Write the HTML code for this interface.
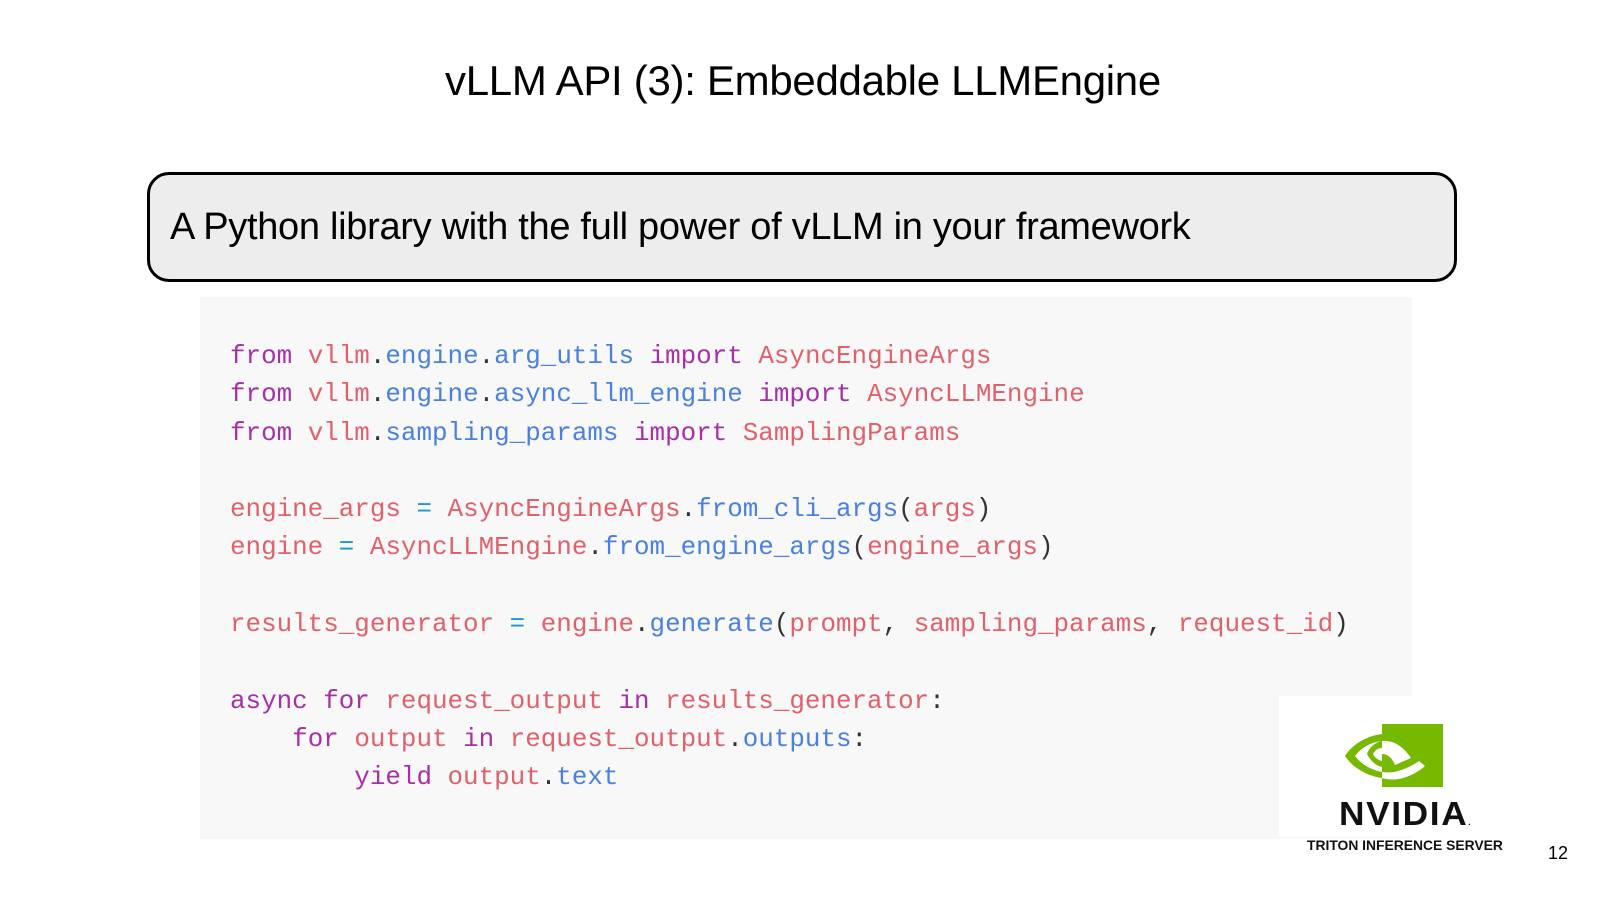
<!DOCTYPE html>
<html><head><meta charset="utf-8"><style>
body{margin:0;width:1602px;height:900px;background:#fff;position:relative;overflow:hidden;font-family:"Liberation Sans",sans-serif}
.title{position:absolute;left:0;width:1606px;text-align:center;top:57px;font-size:42px;color:#000;letter-spacing:-0.3px}
.box{position:absolute;left:147px;top:172px;width:1304px;height:104px;border:3px solid #000;border-radius:22px;background:#ededed}
.box span{position:absolute;left:20px;top:31px;font-size:38px;letter-spacing:-0.3px;color:#000}
.code{position:absolute;left:200px;top:297px;width:1212px;height:542px;background:#f8f8f8}
pre{position:absolute;left:230px;top:337px;margin:0;font-family:"Liberation Mono",monospace;font-size:25.9px;line-height:38.3px;color:#e0606c}
.k{color:#a530a8}.b{color:#4a80e0}.d{color:#333}.e{color:#1a9ad0}
.logo{position:absolute;left:1279px;top:696px;width:160px;height:140px;background:#fff}
.nv{position:absolute;left:1339px;top:795px;font-size:33px;font-weight:bold;letter-spacing:1.5px;color:#111;transform:scaleX(1.07);transform-origin:left}
.tr{position:absolute;left:1307px;top:837px;font-size:14px;color:#111;transform:scaleX(0.99);transform-origin:left;font-weight:bold}
.pn{position:absolute;left:1548px;top:843px;font-size:18px}
</style></head><body>
<div class="title">vLLM API (3): Embeddable LLMEngine</div>
<div class="box"><span>A Python library with the full power of vLLM in your framework</span></div>
<div class="code"></div>
<pre><span class="k">from</span> vllm<span class="d">.</span><span class="b">engine</span><span class="d">.</span><span class="b">arg_utils</span> <span class="k">import</span> AsyncEngineArgs
<span class="k">from</span> vllm<span class="d">.</span><span class="b">engine</span><span class="d">.</span><span class="b">async_llm_engine</span> <span class="k">import</span> AsyncLLMEngine
<span class="k">from</span> vllm<span class="d">.</span><span class="b">sampling_params</span> <span class="k">import</span> SamplingParams

engine_args <span class="e">=</span> AsyncEngineArgs<span class="d">.</span><span class="b">from_cli_args</span><span class="d">(</span>args<span class="d">)</span>
engine <span class="e">=</span> AsyncLLMEngine<span class="d">.</span><span class="b">from_engine_args</span><span class="d">(</span>engine_args<span class="d">)</span>

results_generator <span class="e">=</span> engine<span class="d">.</span><span class="b">generate</span><span class="d">(</span>prompt<span class="d">,</span> sampling_params<span class="d">,</span> request_id<span class="d">)</span>

<span class="k">async for</span> request_output <span class="k">in</span> results_generator<span class="d">:</span>
    <span class="k">for</span> output <span class="k">in</span> request_output<span class="d">.</span><span class="b">outputs</span><span class="d">:</span>
        <span class="k">yield</span> output<span class="d">.</span><span class="b">text</span></pre>
<div class="logo"></div>
<svg style="position:absolute;left:1345px;top:724px" width="98" height="64" viewBox="0 0 98 64">
<rect x="37" y="0" width="61" height="63" fill="#76b900"/>
<path d="M37 10 C20 12 6 22 0 32 C8 44 22 52 37 54 L37 48 C26 46 16 40 10 32 C16 24 26 18 37 17 Z" fill="#76b900"/>
<path d="M37 17 C30 18 24 24 22 30 C26 38 32 42 37 43 L37 37 C33 36 30 34 28 30 C30 26 33 24 37 24 Z" fill="#76b900"/>
<path d="M37 17 C48 16 58 22 66 34 L50 41 C47 34 43 30 37 30 Z M37 48 C50 50 64 44 74 37 L80 42 C66 54 50 58 37 54 Z" fill="#fff"/>
</svg>
<div class="nv">NVIDIA<span style="font-size:8px">.</span></div>
<div class="tr">TRITON INFERENCE SERVER</div>
<div class="pn">12</div>
</body></html>
